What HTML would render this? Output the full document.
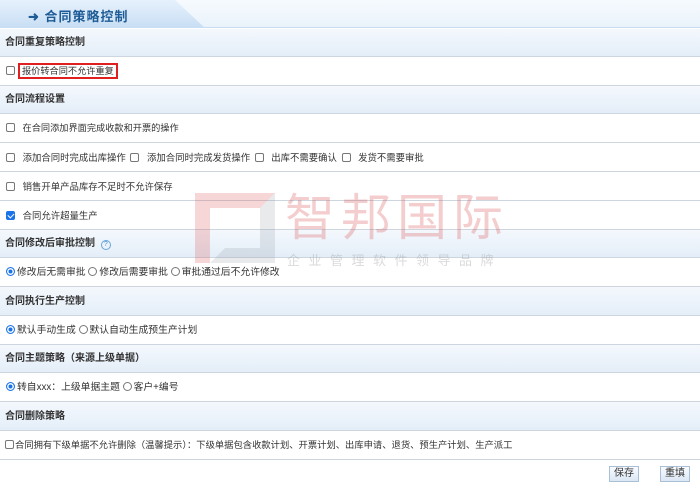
<!DOCTYPE html>
<html><head><meta charset="utf-8"><style>
*{margin:0;padding:0;box-sizing:border-box}
body{width:700px;height:489px;overflow:hidden;background:#fff;font-family:"Liberation Sans","Noto Sans CJK SC",sans-serif;font-size:10px;color:#333;position:relative}
.top{position:absolute;left:0;top:0;width:700px;height:28px;background:linear-gradient(#f6fafe,#eaf3fb);border-bottom:1px solid #c9dcef}
.tab{position:absolute;left:0;top:0;width:205px;height:28px;background:linear-gradient(#e6f1fc,#c8def4);clip-path:polygon(0 0,175px 0,190px 14px,205px 28px,0 28px)}
.tabt{position:absolute;left:28px;top:6px;font-size:13px;font-weight:bold;color:#1d5b96;letter-spacing:1px}
.h{position:absolute;left:0;width:700px;background:linear-gradient(#f4f8fd,#e4eef8);border-bottom:1px solid #cdd6df;font-weight:bold;color:#333;padding-left:5px;font-size:10px}
.r{position:absolute;left:0;width:700px;background:#fff;border-bottom:1px solid #cdd6df;padding-left:6px;font-size:9px}
.cb{display:inline-block;width:9px;height:9px;border:1px solid #777;border-radius:2px;vertical-align:-1px;margin-right:5px;background:#fff}
.ck{background:#1a73e8;border-color:#1a73e8;position:relative}
.ck:after{content:"";position:absolute;left:2px;top:0;width:3px;height:5px;border:solid #fff;border-width:0 1.5px 1.5px 0;transform:rotate(45deg)}
.rd{display:inline-block;width:9px;height:9px;border:1px solid #777;border-radius:50%;vertical-align:-1px;margin-right:2px}
.rdo{border-color:#1a73e8;box-shadow:inset 0 0 0 1.5px #fff;background:#1a73e8}
.btn{position:absolute;top:466px;height:16px;border:1px solid #a9bfd6;background:linear-gradient(#f8fbff,#dbe7f4);font-size:10px;line-height:14px;padding:0 4px;color:#333}
.wm{position:absolute;pointer-events:none}
</style></head><body>
<div class="top"><div class="tab"></div><div class="tabt">➜ 合同策略控制</div></div>

<div class="h" style="top:29px;height:28px;line-height:28px">合同重复策略控制</div>
<div class="r" style="top:57px;height:29px;line-height:28px;font-size:9.2px"><span class="cb" style="margin-right:3px"></span><span style="border:2px solid #e02020;padding:1px 2px">报价转合同不允许重复</span></div>
<div class="h" style="top:86px;height:28px;line-height:28px">合同流程设置</div>
<div class="r" style="top:114px;height:29px;line-height:29px;font-size:9.2px"><span class="cb"></span> 在合同添加界面完成收款和开票的操作</div>
<div class="r" style="top:143px;height:29px;line-height:29px;font-size:9.4px"><span class="cb"></span> 添加合同时完成出库操作 <span class="cb" style="margin-left:2px"></span> 添加合同时完成发货操作 <span class="cb" style="margin-left:2px"></span> 出库不需要确认 <span class="cb" style="margin-left:2px"></span> 发货不需要审批</div>
<div class="r" style="top:172px;height:29px;line-height:29px;font-size:9.4px"><span class="cb"></span> 销售开单产品库存不足时不允许保存</div>
<div class="r" style="top:201px;height:29px;line-height:29px;font-size:9.4px"><span class="cb ck"></span> 合同允许超量生产</div>
<div class="h" style="top:230px;height:28px;line-height:28px">合同修改后审批控制 <span style="display:inline-block;width:10px;height:10px;border:1px solid #6aa6dc;border-radius:50%;font-size:7px;line-height:8px;text-align:center;color:#4a8fd0;font-weight:normal;margin-left:3px">?</span></div>
<div class="r" style="top:258px;height:29px;line-height:29px;font-size:9.8px"><span class="rd rdo"></span>修改后无需审批 <span class="rd"></span>修改后需要审批 <span class="rd"></span>审批通过后不允许修改</div>
<div class="h" style="top:287px;height:29px;line-height:29px">合同执行生产控制</div>
<div class="r" style="top:316px;height:29px;line-height:29px;font-size:9.8px"><span class="rd rdo"></span>默认手动生成 <span class="rd"></span>默认自动生成预生产计划</div>
<div class="h" style="top:345px;height:28px;line-height:28px">合同主题策略（来源上级单据）</div>
<div class="r" style="top:373px;height:29px;line-height:29px;font-size:9.8px"><span class="rd rdo"></span>转自xxx：上级单据主题 <span class="rd"></span>客户+编号</div>
<div class="h" style="top:402px;height:29px;line-height:29px">合同删除策略</div>
<div class="r" style="top:431px;height:29px;line-height:29px;padding-left:5px;font-size:9.3px"><span class="cb" style="margin-right:1px"></span>合同拥有下级单据不允许删除（温馨提示）：下级单据包含收款计划、开票计划、出库申请、退货、预生产计划、生产派工</div>
<div class="btn" style="left:609px">保存</div>
<div class="btn" style="left:660px">重填</div>

<svg class="wm" style="left:190px;top:188px" width="90" height="80">
<polygon points="5,5 85,5 70,20 20,20 20,75 5,75" fill="rgba(220,90,90,0.25)"/>
<polygon points="85,5 85,75 20,75 35,60 70,60 70,20" fill="rgba(140,150,160,0.2)"/>
</svg>
<div class="wm" style="left:285px;top:184px;font-size:50px;color:rgba(215,80,80,0.28);letter-spacing:6px;font-family:'Noto Sans CJK SC',sans-serif;line-height:60px">智邦国际</div>
<div class="wm" style="left:287px;top:250px;font-size:13px;color:rgba(150,150,150,0.35);letter-spacing:8.5px;font-family:'Noto Sans CJK SC',sans-serif">企业管理软件领导品牌</div>
</body></html>
